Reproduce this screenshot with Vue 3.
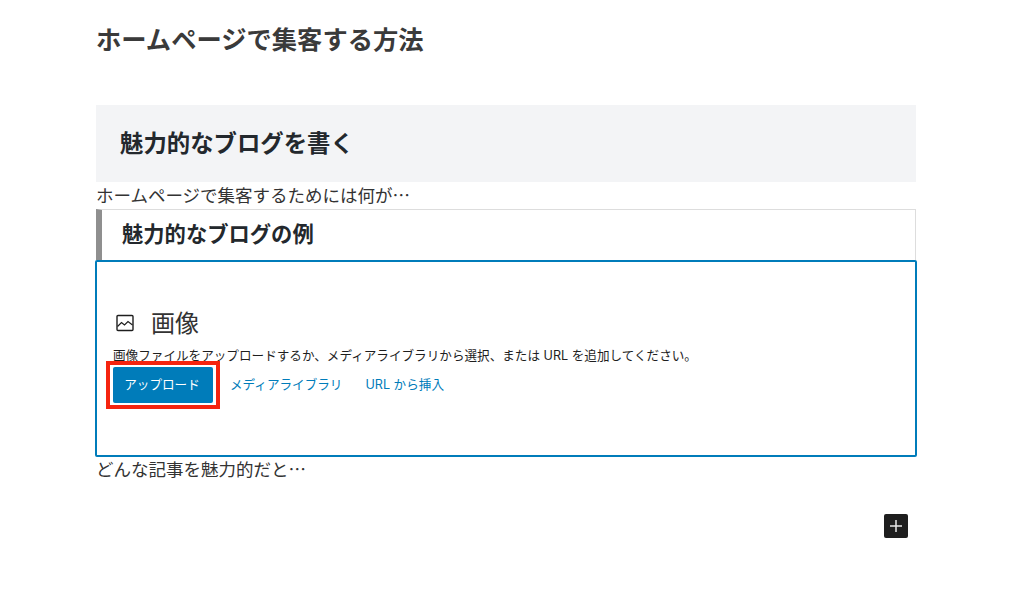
<script setup>
const desc = "画像ファイルをアップロードするか、メディアライブラリから選択、または URL を追加してください。";
</script>

<template>
  <div class="editor">
    <h1 class="post-title">ホームページで集客する方法</h1>
    <h2 class="section-head">魅力的なブログを書く</h2>
    <p class="para">ホームページで集客するためには何が…</p>
    <h3 class="example-head">魅力的なブログの例</h3>
    <div class="placeholder">
      <div class="label">
        <svg class="label-icon" width="18" height="18" viewBox="0 0 18 18" fill="none" stroke="#1e1e1e" stroke-width="1.4">
          <rect x="1" y="1.5" width="16" height="15" rx="1" />
          <path d="M1.5 12.5 L5.5 8.5 L8.5 11 L12 7.5 L16.5 11" stroke-width="1.2" />
        </svg>
        <span>画像</span>
      </div>
      <p class="desc">{{ desc }}</p>
      <div class="actions">
        <span class="mark">
          <button class="upload">アップロード</button>
        </span>
        <a class="link first">メディアライブラリ</a>
        <a class="link">URL から挿入</a>
      </div>
    </div>
    <p class="para after">どんな記事を魅力的だと…</p>
    <div class="inserter-row">
      <button class="inserter">
        <svg width="12" height="12" viewBox="0 0 12 12" stroke="#e8e8e8" stroke-width="1.5">
          <path d="M6 0 V12 M0 6 H12" />
        </svg>
      </button>
    </div>
  </div>
</template>

<style>
html, body {
  background: #fff;
}
</style>

<style scoped>
.editor {
  width: 820px;
  height: 594px;
  margin-left: 96px;
  box-sizing: border-box;
  font-family: "Inter", "Liberation Sans", "Noto Sans CJK JP", sans-serif;
  color: #1e1e1e;
}

.post-title {
  margin: 0;
  padding: 24px 0 0;
  height: 105px;
  box-sizing: border-box;
  font-size: 25.3px;
  line-height: 32px;
  font-weight: 700;
  color: #3a3a3a;
}

.section-head {
  margin: 0;
  height: 77px;
  box-sizing: border-box;
  padding: 0 0 3px 24px;
  display: flex;
  align-items: center;
  background: #f3f4f6;
  font-size: 23.4px;
  font-weight: 700;
  color: #23282d;
}

.para {
  margin: 0;
  height: 27px;
  font-family: "Noto Sans CJK JP", sans-serif;
  font-size: 17.5px;
  line-height: 26px;
  color: #333;
}

.example-head {
  margin: 0;
  height: 51px;
  box-sizing: border-box;
  padding: 0 0 5px 20px;
  display: flex;
  align-items: center;
  border: 1px solid #ddd;
  border-left: 6px solid #8f8f8f;
  border-bottom: 0;
  font-size: 21.3px;
  font-weight: 700;
  color: #23282d;
}

.placeholder {
  margin: 0 -1px;
  height: 197px;
  box-sizing: border-box;
  padding: 45px 16px 0;
  border: 2px solid #007cba;
  border-radius: 2px;
}

.label {
  display: flex;
  align-items: center;
  gap: 17px;
  height: 28px;
  margin-left: 3px;
  font-size: 24px;
  color: #333;
}

.label-icon {
  flex: none;
  margin-top: 3px;
}

.desc {
  margin: 13px 0 0;
  font-size: 12.6px;
  line-height: 16px;
  white-space: nowrap;
  color: #1e1e1e;
}

.actions {
  display: flex;
  align-items: center;
  margin-top: 3px;
}

.mark {
  display: flex;
  margin: -6px -7px;
  padding: 2px 3px;
  border: 4px solid #f5240f;
  background: #fff;
}

.upload {
  width: 100px;
  height: 36px;
  padding: 0 2px 3px 0;
  border: 0;
  border-radius: 2px;
  background: #007cba;
  color: #fff;
  font-family: inherit;
  font-size: 12.6px;
}

.link {
  font-size: 12.6px;
  color: #007cba;
  margin: 0 0 4px 23px;
}

.link.first {
  margin-left: 17px;
}

.after {
  margin-top: -1px;
  padding-left: 0;
}

.inserter-row {
  display: flex;
  justify-content: flex-end;
  padding: 31px 8px 0 0;
}

.inserter {
  width: 24px;
  height: 24px;
  padding: 0;
  border: 0;
  border-radius: 2px;
  background: #1e1e1e;
  display: flex;
  align-items: center;
  justify-content: center;
}
</style>
